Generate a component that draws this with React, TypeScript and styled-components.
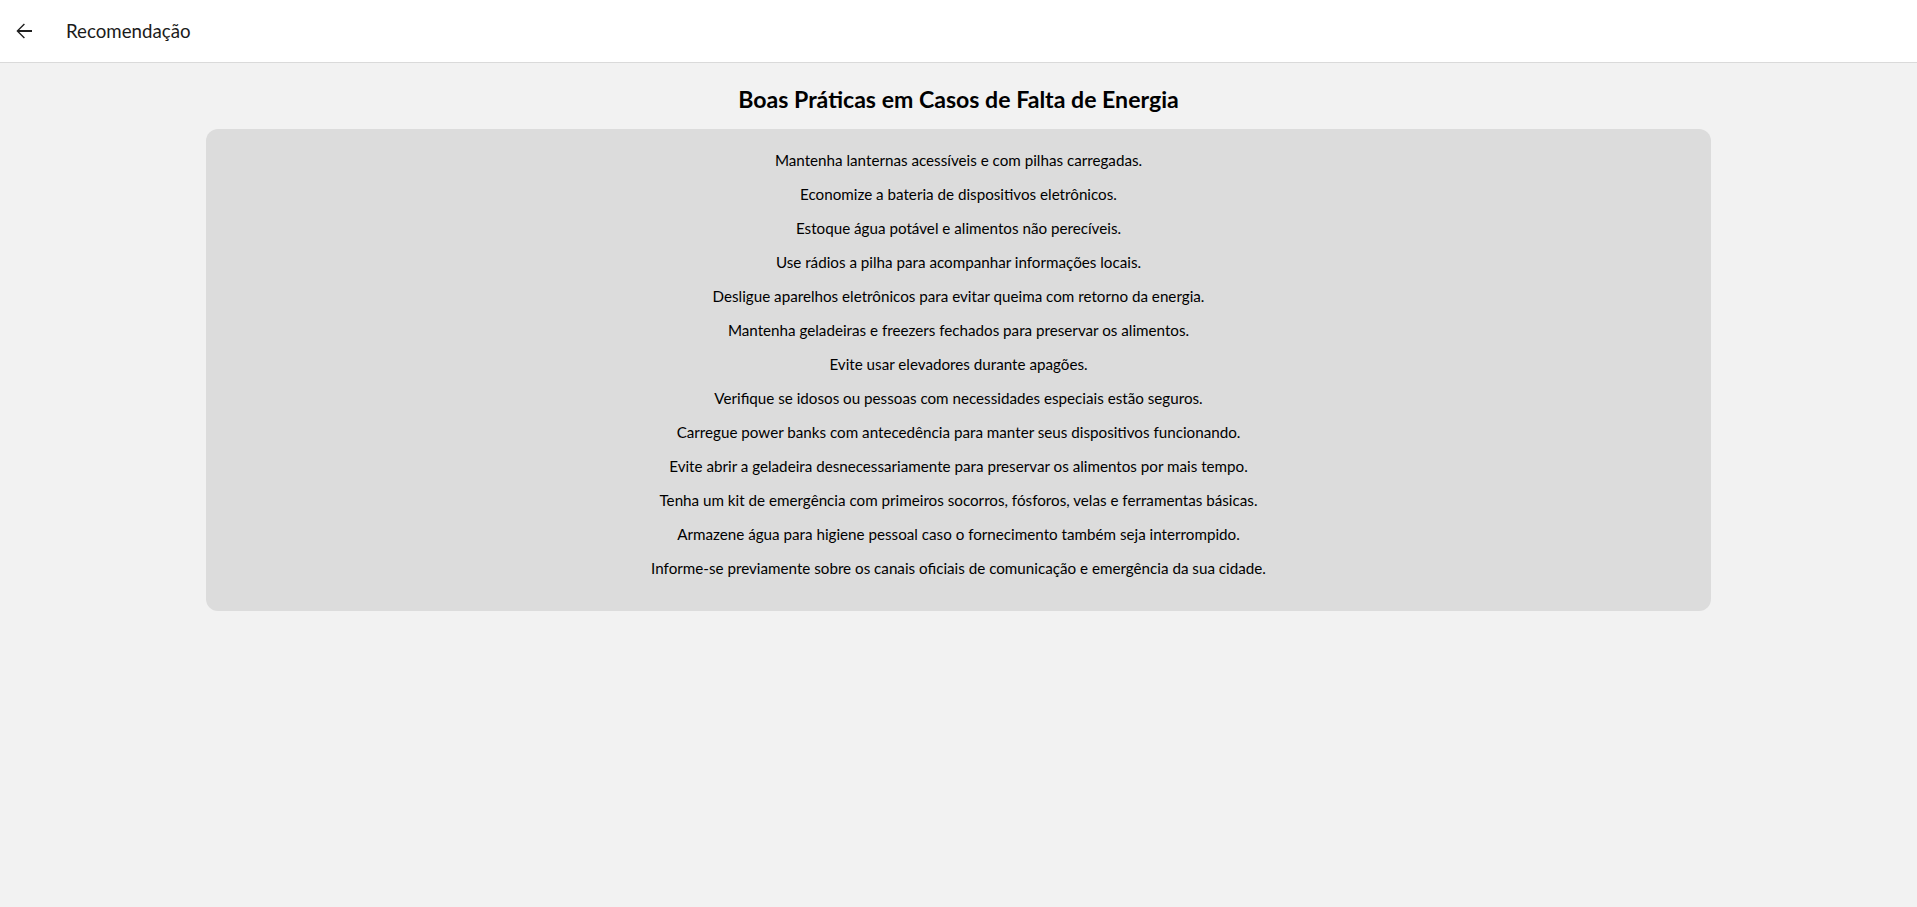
import React from "react";
import styled, { createGlobalStyle } from "styled-components";

const GlobalStyle = createGlobalStyle`
  html, body {
    margin: 0;
    padding: 0;
    background: #f2f2f2;
    font-family: Lato, "Liberation Sans", sans-serif;
  }
  * { box-sizing: border-box; }
`;

const Page = styled.div`
  min-height: 907px;
  background: #f2f2f2;
  display: flex;
  flex-direction: column;
`;

const Toolbar = styled.header`
  height: 63px;
  background: #ffffff;
  border-bottom: 1px solid #dadada;
  display: flex;
  align-items: center;
  padding-left: 12px;
`;

const BackButton = styled.button`
  width: 24px;
  height: 24px;
  padding: 0;
  border: none;
  background: transparent;
  display: flex;
  align-items: center;
  justify-content: center;
  color: #1f1f1f;
  cursor: pointer;
`;

const ToolbarTitle = styled.h1`
  margin: 0 0 0 30px;
  font-size: 18.7px;
  font-weight: 400;
  color: #1b1b1b;
  letter-spacing: 0;
`;

const Content = styled.main`
  display: flex;
  flex-direction: column;
  align-items: center;
  padding-top: 21px;
`;

const Heading = styled.h2`
  margin: 0 0 15px;
  font-size: 23.1px;
  line-height: 30px;
  font-weight: 700;
  color: #000;
  text-align: center;
`;

const Card = styled.section`
  width: 1505px;
  background: #dcdcdc;
  border-radius: 12px;
  padding: 14px 0 26px;
  display: flex;
  flex-direction: column;
  align-items: center;
`;

const Tip = styled.p`
  margin: 0;
  font-size: 15.2px;
  line-height: 34px;
  color: #000;
  text-align: center;
`;

const tips = [
  "Mantenha lanternas acessíveis e com pilhas carregadas.",
  "Economize a bateria de dispositivos eletrônicos.",
  "Estoque água potável e alimentos não perecíveis.",
  "Use rádios a pilha para acompanhar informações locais.",
  "Desligue aparelhos eletrônicos para evitar queima com retorno da energia.",
  "Mantenha geladeiras e freezers fechados para preservar os alimentos.",
  "Evite usar elevadores durante apagões.",
  "Verifique se idosos ou pessoas com necessidades especiais estão seguros.",
  "Carregue power banks com antecedência para manter seus dispositivos funcionando.",
  "Evite abrir a geladeira desnecessariamente para preservar os alimentos por mais tempo.",
  "Tenha um kit de emergência com primeiros socorros, fósforos, velas e ferramentas básicas.",
  "Armazene água para higiene pessoal caso o fornecimento também seja interrompido.",
  "Informe-se previamente sobre os canais oficiais de comunicação e emergência da sua cidade.",
];

const ArrowBack = () => (
  <svg width="24" height="24" viewBox="0 0 24 24" fill="currentColor" aria-hidden="true">
    <path d="M20 11.1H7.3l5.6-5.6L11.9 4.5 4.4 12l7.5 7.5 1-1-5.6-5.6H20z" />
  </svg>
);

export default function App() {
  return (
    <>
      <GlobalStyle />
      <Page>
        <Toolbar>
          <BackButton aria-label="Voltar">
            <ArrowBack />
          </BackButton>
          <ToolbarTitle>Recomendação</ToolbarTitle>
        </Toolbar>
        <Content>
          <Heading>Boas Práticas em Casos de Falta de Energia</Heading>
          <Card>
            {tips.map((t) => (
              <Tip key={t}>{t}</Tip>
            ))}
          </Card>
        </Content>
      </Page>
    </>
  );
}
